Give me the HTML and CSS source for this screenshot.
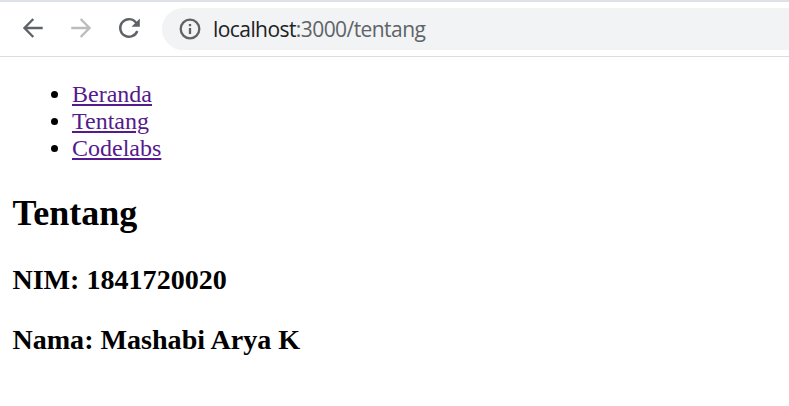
FILE: index.html
```html
<!DOCTYPE html>
<html lang="id">
<head>
<meta charset="utf-8">
<title>Tentang</title>
<link rel="stylesheet" href="styles.css">
</head>
<body>
<header class="toolbar">
  <svg class="icon" viewBox="0 0 24 24"><path d="M21.700 12H4M12.300 3L3.500 12l8.800 9"/></svg>
  <svg class="icon disabled" viewBox="0 0 24 24"><path d="M2.300 12h17.500M11.700 3l8.800 9-8.800 9"/></svg>
  <svg class="icon" viewBox="0 0 24 24"><path d="M20.300 15A8.800 8.800 0 1 1 18.500 6L20 7.500"/><path class="fill" d="M22.800 2.500v8.300h-8.300z"/></svg>
  <div class="address">
    <svg class="info" viewBox="0 0 22 22"><circle cx="11" cy="11" r="9.300"/><path d="M11 10v6M11 6v2.200"/></svg>
    <span class="url">localhost<span class="path">:3000/tentang</span></span>
  </div>
</header>
<main>
  <ul>
    <li><a href="#">Beranda</a></li>
    <li><a href="#">Tentang</a></li>
    <li><a href="#">Codelabs</a></li>
  </ul>
  <h2>Tentang</h2>
  <h3>NIM: 1841720020</h3>
  <h3>Nama: Mashabi Arya K</h3>
</main>
</body>
</html>
```
FILE: styles.css
```css
body {
  margin: 0;
  background: #fff;
  color: #000;
  font: 24px/27px "Liberation Serif", serif;
  overflow: hidden;
}
.toolbar {
  box-sizing: border-box;
  height: 57px;
  padding: 6px 0 6px 21px;
  border-top: 2px solid #dee1e6;
  border-bottom: 1px solid #dadce0;
  display: flex;
  align-items: center;
  gap: 24px;
}
.icon {
  width: 24px;
  height: 24px;
  margin-bottom: 2px;
  flex: none;
  fill: none;
  stroke: #5f6368;
  stroke-width: 2.4;
}
.disabled { stroke: #babcbe; }
.fill { fill: #5f6368; stroke: none; }
.address {
  flex: 1;
  height: 42px;
  margin-left: -3px;
  padding-left: 16.5px;
  border-radius: 21px 0 0 21px;
  background: #f1f3f4;
  display: flex;
  align-items: center;
  gap: 12.5px;
}
.info {
  width: 22px;
  height: 22px;
  fill: none;
  stroke: #5f6368;
  stroke-width: 2.3;
}
.url {
  font: 21px/28px "Open Sans", sans-serif;
  letter-spacing: -0.57px;
  color: #202124;
}
.path { color: #5f6368; }
main { padding: 24px 12px; }
ul { margin: 0; padding-left: 60px; }
a { color: #551a8b; text-decoration: underline; }
h2 { margin: 30px 0 30px 0.5px; font-size: 36px; line-height: 42px; }
h3 { margin: 28px 0 28px 0.4px; font-size: 28.08px; line-height: 32px; }
```
